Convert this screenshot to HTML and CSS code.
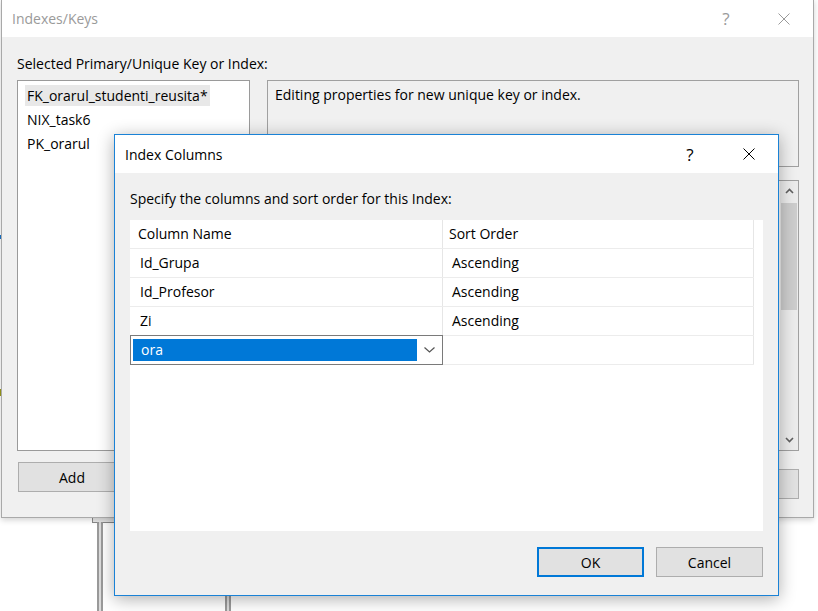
FILE: index.html
```html
<!DOCTYPE html>
<html>
<head>
<meta charset="utf-8">
<title>Indexes/Keys</title>
<link rel="stylesheet" href="styles.css">
</head>
<body>
<div class="desktop">
  <div class="bg-box"></div>
  <div class="bg-rail bg-rail-a"></div>
  <div class="bg-rail bg-rail-b"></div>
  <span class="edge-mark edge-blue"></span>
  <span class="edge-mark edge-olive"></span>

  <section class="window outer">
    <header class="titlebar outer-titlebar">
      <span class="title">Indexes/Keys</span>
      <span class="tb-help">?</span>
      <span class="tb-close">
        <svg width="12" height="12" viewBox="0 0 12 12"><path d="M0.5 0.5 L11.5 11.5 M11.5 0.5 L0.5 11.5" stroke="currentColor" stroke-width="1" fill="none"/></svg>
      </span>
    </header>
    <div class="outer-body">
      <div class="label">Selected Primary/Unique Key or Index:</div>
      <div class="outer-main">
        <div class="left-col">
          <ul class="listbox">
            <li><span class="item sel">FK_orarul_studenti_reusita*</span></li>
            <li><span class="item">NIX_task6</span></li>
            <li><span class="item">PK_orarul</span></li>
          </ul>
          <button class="btn add-btn">Add</button>
        </div>
        <div class="right-col">
          <div class="desc">Editing properties for new unique key or index.</div>
          <div class="propgrid">
            <div class="pg-content"></div>
            <div class="scrollbar">
              <span class="sb-arrow">
                <svg width="9" height="6" viewBox="0 0 9 6"><path d="M1 5 L4.5 1.5 L8 5" stroke="#606060" stroke-width="1.6" fill="none"/></svg>
              </span>
              <div class="sb-track"><div class="sb-thumb"></div></div>
              <span class="sb-arrow">
                <svg width="9" height="6" viewBox="0 0 9 6"><path d="M1 1 L4.5 4.5 L8 1" stroke="#606060" stroke-width="1.6" fill="none"/></svg>
              </span>
            </div>
          </div>
          <div class="right-btns"><button class="btn close-btn">Close</button></div>
        </div>
      </div>
    </div>
  </section>

  <section class="window inner">
    <header class="titlebar inner-titlebar">
      <span class="title">Index Columns</span>
      <span class="tb-help">?</span>
      <span class="tb-close">
        <svg width="12" height="12" viewBox="0 0 12 12"><path d="M0.5 0.5 L11.5 11.5 M11.5 0.5 L0.5 11.5" stroke="currentColor" stroke-width="1" fill="none"/></svg>
      </span>
    </header>
    <div class="inner-body">
      <div class="label">Specify the columns and sort order for this Index:</div>
      <div class="grid">
        <div class="row head">
          <div class="cell c1">Column Name</div>
          <div class="cell c2">Sort Order</div>
        </div>
        <div class="row">
          <div class="cell c1">Id_Grupa</div>
          <div class="cell c2">Ascending</div>
        </div>
        <div class="row">
          <div class="cell c1">Id_Profesor</div>
          <div class="cell c2">Ascending</div>
        </div>
        <div class="row">
          <div class="cell c1">Zi</div>
          <div class="cell c2">Ascending</div>
        </div>
        <div class="row edit-row">
          <div class="combo">
            <span class="combo-value">ora</span>
            <span class="combo-arrow">
              <svg width="11" height="6" viewBox="0 0 11 6"><path d="M0.5 0.5 L5.5 5 L10.5 0.5" stroke="#555" stroke-width="1.2" fill="none"/></svg>
            </span>
          </div>
          <div class="cell c2"></div>
        </div>
      </div>
      <div class="dlg-btns">
        <button class="btn ok-btn">OK</button>
        <button class="btn">Cancel</button>
      </div>
    </div>
  </section>
</div>
</body>
</html>
```
FILE: styles.css
```css
* { box-sizing: border-box; }

html, body {
  margin: 0;
  padding: 0;
  background: #ffffff;
}

body {
  font-family: "Open Sans", "Noto Sans", sans-serif;
  font-size: 14px;
  letter-spacing: 0;
  color: #000;
}

.desktop {
  position: relative;
  width: 818px;
  height: 611px;
  overflow: hidden;
  background: #fff;
}

/* background app remnants */
.bg-box {
  position: absolute;
  left: 92px;
  top: 515px;
  width: 23px;
  height: 8px;
  border: 1px solid #8a8a8a;
  background: #e8e8e8;
}
.bg-rail {
  position: absolute;
  width: 6px;
  border-left: 2px solid #9a9a9a;
  border-right: 2px solid #9a9a9a;
  background: #dcdcdc;
}
.bg-rail-a { left: 97px; top: 522px; height: 89px; }
.bg-rail-b { left: 225px; top: 590px; height: 21px; }

.edge-mark {
  position: absolute;
  left: 0;
  width: 2px;
}
.edge-blue { top: 235px; height: 4px; background: #1a73c9; }
.edge-olive { top: 389px; height: 7px; background: #9c9c1c; }

/* windows */
.window {
  position: absolute;
  display: flex;
  flex-direction: column;
}

.titlebar {
  display: flex;
  align-items: center;
  background: #fff;
  flex: none;
}
.titlebar .title {
  flex: 1;
  font-size: 14px;
}
.tb-help {
  font-size: 17px;
  width: 20px;
  text-align: center;
}
.tb-close {
  display: flex;
  align-items: center;
  justify-content: center;
  width: 46px;
}

/* outer window */
.outer {
  left: 1px;
  top: -1px;
  width: 813px;
  height: 519px;
  border: 1px solid #a9a9a9;
  background: #f0f0f0;
  box-shadow: 0 2px 6px rgba(0, 0, 0, 0.18);
}
.outer-titlebar {
  height: 37px;
  padding-left: 10px;
  color: #9a9a9a;
}
.outer-titlebar .tb-help { margin-right: 25px; }
.outer-titlebar .tb-close { margin-right: 6px; }

.outer-body {
  flex: 1;
  padding: 17px 14px 0 15px;
}
.label {
  line-height: 20px;
  height: 20px;
}
.outer-main {
  display: flex;
  margin-top: 6px;
  gap: 17px;
}
.left-col {
  width: 233px;
  display: flex;
  flex-direction: column;
}
.listbox {
  list-style: none;
  margin: 0;
  padding: 4px 0 0 7px;
  height: 371px;
  background: #fff;
  border: 1px solid #9a9a9a;
}
.listbox li {
  height: 24px;
}
.item {
  display: inline-block;
  line-height: 21px;
  padding: 0 2px;
}
.item.sel { background: #e8e8e8; }

.btn {
  font-family: inherit;
  font-size: 14px;
  color: #000;
  background: #e1e1e1;
  border: 1px solid #adadad;
  height: 30px;
  padding: 0;
  margin: 0;
}
.add-btn {
  width: 108px;
  margin: 11px 0 0 1px;
}

.right-col {
  width: 532px;
  display: flex;
  flex-direction: column;
}
.desc {
  height: 87px;
  border: 1px solid #a0a0a0;
  padding: 4px 7px;
  line-height: 20px;
  background: #f0f0f0;
}
.propgrid {
  margin-top: 13px;
  height: 271px;
  border: 1px solid #a0a0a0;
  display: flex;
  background: #fff;
}
.pg-content { flex: 1; }
.scrollbar {
  width: 18px;
  display: flex;
  flex-direction: column;
  background: #ececec;
}
.sb-arrow {
  height: 20px;
  display: flex;
  align-items: center;
  justify-content: center;
}
.sb-track { flex: 1; }
.sb-thumb {
  height: 107px;
  margin: 2px 1px 0;
  background: #cdcdcd;
}
.right-btns {
  display: flex;
  justify-content: flex-end;
  margin-top: 18px;
}
.close-btn { width: 108px; }

/* inner dialog */
.inner {
  left: 114px;
  top: 134px;
  width: 665px;
  height: 462px;
  border: 1px solid #1a82d6;
  background: #f0f0f0;
  box-shadow: 0 3px 16px rgba(0, 0, 0, 0.32);
}
.inner-titlebar {
  height: 38px;
  padding-left: 10px;
}
.inner-titlebar .tb-help { margin-right: 26px; }
.inner-titlebar .tb-close { margin-right: 6px; }

.inner-body {
  flex: 1;
  padding: 16px 15px 0 15px;
  display: flex;
  flex-direction: column;
}
.grid {
  margin-top: 11px;
  height: 311px;
  background: #fff;
  padding-right: 9px;
}
.row {
  display: flex;
  height: 29px;
  border-bottom: 1px solid #ececec;
}
.cell {
  line-height: 28px;
  border-right: 1px solid #e6e6e6;
}
.cell.c1 { width: 313px; padding-left: 10px; }
.cell.c2 { width: 311px; padding-left: 9px; }
.head .cell.c1 { padding-left: 8px; }
.head .cell.c2 { padding-left: 6px; }

.edit-row { height: 29px; }
.combo {
  width: 313px;
  height: 30px;
  margin-top: -1px;
  border: 1px solid #7a7a7a;
  display: flex;
  align-items: stretch;
  padding: 3px 0 3px 2px;
  background: #fff;
}
.combo-value {
  flex: 1;
  background: #0078d7;
  color: #fff;
  line-height: 22px;
  padding-left: 8px;
}
.combo-arrow {
  width: 25px;
  display: flex;
  align-items: center;
  justify-content: center;
}

.dlg-btns {
  display: flex;
  justify-content: flex-end;
  gap: 12px;
  margin-top: 16px;
}
.dlg-btns .btn { width: 107px; }
.ok-btn { border: 2px solid #0078d7; }
```
